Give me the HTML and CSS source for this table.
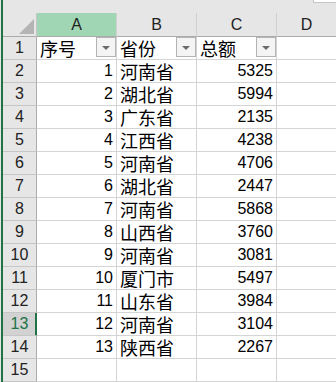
FILE: index.html
```html
<!DOCTYPE html>
<html lang="zh">
<head>
<meta charset="utf-8">
<link rel="stylesheet" href="styles.css">
</head>
<body>
<div class="frame">
  <div class="edge"></div>
  <div class="main">
    <div class="topstrip"><div class="namebox"></div></div>
    <div class="sheet">
      <div class="corner"><div class="tri"></div></div>
      <div class="colh sel">A</div>
      <div class="colh">B</div>
      <div class="colh">C</div>
      <div class="colh last">D</div>

      <div class="rowh">1</div>
      <div class="cell txt fh"><span>序号</span><span class="fbtn"><i></i></span></div>
      <div class="cell txt fh"><span>省份</span><span class="fbtn"><i></i></span></div>
      <div class="cell txt fh"><span>总额</span><span class="fbtn"><i></i></span></div>
      <div class="cell last"></div>

      <div class="rowh">2</div><div class="cell num">1</div><div class="cell txt">河南省</div><div class="cell num">5325</div><div class="cell last"></div>
      <div class="rowh">3</div><div class="cell num">2</div><div class="cell txt">湖北省</div><div class="cell num">5994</div><div class="cell last"></div>
      <div class="rowh">4</div><div class="cell num">3</div><div class="cell txt">广东省</div><div class="cell num">2135</div><div class="cell last"></div>
      <div class="rowh">5</div><div class="cell num">4</div><div class="cell txt">江西省</div><div class="cell num">4238</div><div class="cell last"></div>
      <div class="rowh">6</div><div class="cell num">5</div><div class="cell txt">河南省</div><div class="cell num">4706</div><div class="cell last"></div>
      <div class="rowh">7</div><div class="cell num">6</div><div class="cell txt">湖北省</div><div class="cell num">2447</div><div class="cell last"></div>
      <div class="rowh">8</div><div class="cell num">7</div><div class="cell txt">河南省</div><div class="cell num">5868</div><div class="cell last"></div>
      <div class="rowh">9</div><div class="cell num">8</div><div class="cell txt">山西省</div><div class="cell num">3760</div><div class="cell last"></div>
      <div class="rowh">10</div><div class="cell num">9</div><div class="cell txt">河南省</div><div class="cell num">3081</div><div class="cell last"></div>
      <div class="rowh">11</div><div class="cell num">10</div><div class="cell txt">厦门市</div><div class="cell num">5497</div><div class="cell last"></div>
      <div class="rowh">12</div><div class="cell num">11</div><div class="cell txt">山东省</div><div class="cell num">3984</div><div class="cell last"></div>
      <div class="rowh selrow">13</div><div class="cell num">12</div><div class="cell txt">河南省</div><div class="cell num">3104</div><div class="cell last"></div>
      <div class="rowh">14</div><div class="cell num">13</div><div class="cell txt">陕西省</div><div class="cell num">2267</div><div class="cell last"></div>
      <div class="rowh">15</div><div class="cell"></div><div class="cell"></div><div class="cell"></div><div class="cell last"></div>
    </div>
  </div>
</div>
</body>
</html>
```
FILE: styles.css
```css
* { box-sizing: border-box; }
html, body { margin: 0; padding: 0; }
body {
  width: 336px;
  height: 382px;
  overflow: hidden;
  background: #e6e6e6;
  font-family: "Liberation Sans", "Noto Sans CJK SC", sans-serif;
  color: #111;
}
.frame { display: flex; height: 382px; }
.edge {
  width: 3px;
  flex: none;
  border-left: 1px solid #e6e6e6;
  background: #217346;
}
.main { flex: 1; display: flex; flex-direction: column; min-width: 0; }
.topstrip {
  height: 13px;
  flex: none;
  display: flex;
  justify-content: flex-end;
  align-items: flex-start;
  background: #e6e6e6;
}
.namebox {
  width: 23px;
  height: 3px;
  background: #fff;
  border-left: 1px solid #c6c6c6;
  border-bottom: 1px solid #c6c6c6;
}
.sheet {
  display: grid;
  grid-template-columns: 34px 80px 80px 80px 1fr;
  grid-template-rows: 24px;
  grid-auto-rows: 23px;
  background: #fff;
}
.corner {
  background: #e6e6e6;
  border-right: 1px solid #c6c6c6;
  border-bottom: 1px solid #ababab;
  display: flex;
  justify-content: flex-end;
  align-items: flex-end;
  padding: 0 2px 2px 0;
}
.tri {
  width: 15px;
  height: 15px;
  background: #b4b4b4;
  clip-path: polygon(100% 0, 100% 100%, 0 100%);
}
.colh {
  background: #e6e6e6;
  border-right: 1px solid #d0d0d0;
  border-bottom: 1px solid #ababab;
  display: flex;
  align-items: center;
  justify-content: center;
  font-size: 16px;
  color: #222;
  padding-top: 1px;
}
.colh.sel { background: #a0d6b4; }
.colh.last { border-right: none; }
.rowh {
  background: #e6e6e6;
  border-right: 1px solid #ababab;
  border-bottom: 1px solid #c6c6c6;
  display: flex;
  align-items: center;
  justify-content: center;
  font-size: 16px;
  color: #222;
}
.rowh.selrow {
  background: #d2d2d2;
  border-right-color: #217346;
  box-shadow: inset -1px 0 0 #217346;
  color: #217346;
}
.cell {
  border-right: 1px solid #d4d4d4;
  border-bottom: 1px solid #d4d4d4;
  display: flex;
  align-items: center;
  font-size: 16px;
  color: #000;
}
.cell.last { border-right: none; }
.cell.num { justify-content: flex-end; padding-right: 3px; }
.cell.txt {
  font-family: "Noto Sans CJK SC", sans-serif;
  font-size: 18px;
  line-height: 20px;
  padding-left: 3px;
}
.cell.fh { justify-content: space-between; align-items: flex-start; }
.fh span:first-child { line-height: 22px; }
.fbtn {
  width: 20px;
  height: 20px;
  border: 1px solid #b4b4b4;
  background: #f4f4f4;
  display: flex;
  align-items: center;
  justify-content: center;
  flex: none;
}
.fbtn i {
  width: 0;
  height: 0;
  border-left: 4px solid transparent;
  border-right: 4px solid transparent;
  border-top: 4px solid #6a6a6a;
  margin-top: 1px;
}
```
